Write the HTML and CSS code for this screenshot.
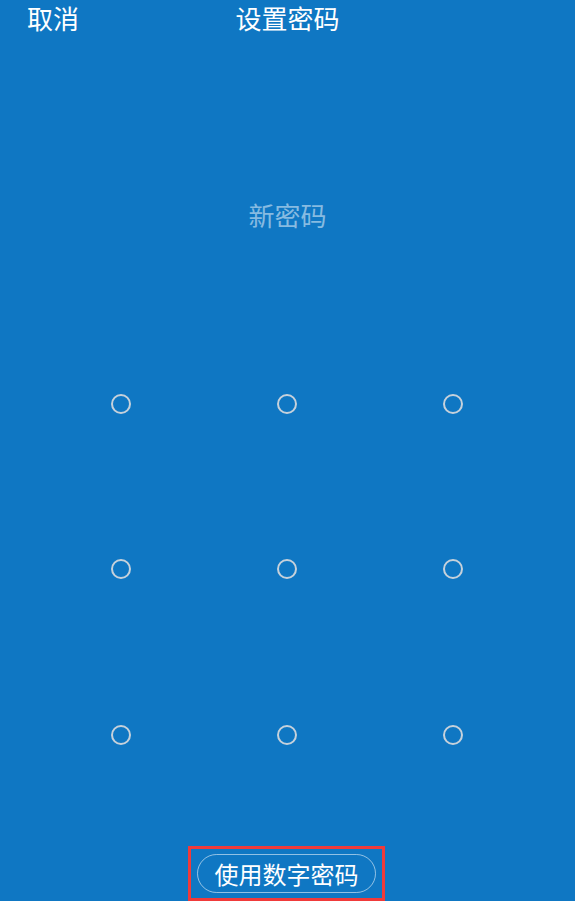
FILE: index.html
```html
<!DOCTYPE html>
<html lang="zh-CN">
<head>
<meta charset="utf-8">
<title>设置密码</title>
<link rel="stylesheet" href="styles.css">
</head>
<body>
<div class="screen">
  <header class="topbar">
    <span class="cancel">取消</span>
    <span class="title">设置密码</span>
  </header>
  <div class="hint">新密码</div>
  <div class="pattern">
    <span class="dot"></span><span class="dot"></span><span class="dot"></span>
    <span class="dot"></span><span class="dot"></span><span class="dot"></span>
    <span class="dot"></span><span class="dot"></span><span class="dot"></span>
  </div>
  <div class="footer">
    <div class="highlight">
      <button class="pill">使用数字密码</button>
    </div>
  </div>
</div>
</body>
</html>
```

FILE: styles.css
```css
html, body {
  margin: 0;
  padding: 0;
  height: 100%;
  background: #0f77c3;
}
body {
  font-family: "Noto Sans CJK SC", "Noto Sans", sans-serif;
  color: #ffffff;
  overflow: hidden;
}
.screen {
  display: flex;
  flex-direction: column;
  height: 901px;
}
.topbar {
  position: relative;
  height: 36px;
  display: flex;
  align-items: center;
  justify-content: center;
  font-size: 26px;
  line-height: 36px;
}
.cancel {
  position: absolute;
  left: 27px;
  top: 0;
}
.title {
  margin-left: 0;
}
.hint {
  margin-top: 161px;
  height: 36px;
  line-height: 36px;
  text-align: center;
  font-size: 26px;
  color: rgba(255, 255, 255, 0.5);
}
.pattern {
  margin-top: 88px;
  align-self: center;
  display: grid;
  grid-template-columns: repeat(3, 166px);
  grid-auto-rows: 165.5px;
  place-items: center;
  transform: translateX(-1px);
}
.dot {
  width: 16px;
  height: 16px;
  border: 2px solid #c6d1db;
  border-radius: 50%;
}
.footer {
  margin-top: auto;
  display: flex;
  justify-content: center;
}
.highlight {
  border: 3px solid #f03a3a;
  padding: 5px 6px 5px 6px;
  width: 179px;
  height: 39px;
  transform: translateX(-1px);
}
.pill {
  box-sizing: border-box;
  width: 179px;
  height: 39px;
  border: 1px solid rgba(255, 255, 255, 0.55);
  border-radius: 20px;
  background: transparent;
  color: #ffffff;
  font-family: "Noto Sans CJK SC", "Noto Sans", sans-serif;
  font-size: 24px;
  line-height: 37px;
  padding: 0;
}
```
